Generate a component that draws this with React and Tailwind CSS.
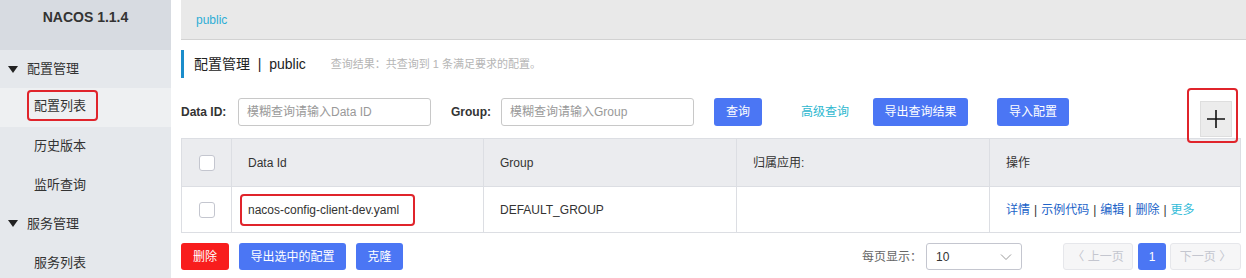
import React from "react";

const font = { fontFamily: '"Liberation Sans", "Noto Sans CJK SC", sans-serif' };

function Checkbox() {
  return <div className="w-4 h-4 rounded-[3px] border border-[#c4c6cf] bg-white" />;
}

function SideItem({ children, cls }) {
  return (
    <div className={`shrink-0 flex items-center pl-[34px] text-[13px] text-[#333] ${cls}`}>
      {children}
    </div>
  );
}

function SideGroup({ children, cls }) {
  return (
    <div className={`shrink-0 flex items-center pl-[8px] text-[13px] text-[#333] ${cls}`}>
      <svg width="10" height="7" viewBox="0 0 10 7" className="mr-[9px]">
        <path d="M0 0h10L5 7z" fill="#222" />
      </svg>
      {children}
    </div>
  );
}

function BlueBtn({ children, w }) {
  return (
    <div className={`h-[28px] ${w} rounded-[3px] bg-[#4b76f4] text-white text-[12px] flex items-center justify-center`}>
      {children}
    </div>
  );
}

export default function App() {
  return (
    <div className="w-[1246px] h-[278px] overflow-hidden flex bg-white" style={font}>
      {/* Sidebar */}
      <div className="w-[171px] shrink-0 bg-[#e5e8ec] flex flex-col">
        <div className="h-[50px] shrink-0 bg-[#d7dbe1] flex justify-center pt-[7px]">
          <span className="text-[14px] font-bold text-[#333]">NACOS 1.1.4</span>
        </div>
        <SideGroup cls="h-[38px]">配置管理</SideGroup>
        <SideItem cls="h-[39px] pb-[4px] bg-[#eef0f2]">
          <span className="relative">
            配置列表
            <span className="absolute left-[-7px] right-[-12px] top-[-6px] bottom-[-6px] border-2 border-[#e0242b] rounded-[4px]" />
          </span>
        </SideItem>
        <SideItem cls="h-[38px]">历史版本</SideItem>
        <SideItem cls="h-[39px]">监听查询</SideItem>
        <SideGroup cls="h-[39px]">服务管理</SideGroup>
        <SideItem cls="h-[39px]">服务列表</SideItem>
      </div>

      {/* Main */}
      <div className="ml-[10px] flex-1 flex flex-col">
        <div className="h-[40px] bg-[#e9e9e9] border-b border-[#d2d2d2] flex items-center pl-[15px]">
          <span className="text-[12px] text-[#2eaed6]">public</span>
        </div>

        <div className="pr-[5px]">
          {/* Title */}
          <div className="mt-[10px] h-[28px] border-l-[3px] border-[#1b8dcb] flex items-center pl-[10px]">
            <span className="text-[14px] text-[#222]">配置管理&nbsp;&nbsp;|&nbsp;&nbsp;public</span>
            <span className="ml-[25px] text-[11px] text-[#b5b5b5]">查询结果：共查询到 1 条满足要求的配置。</span>
          </div>

          {/* Search row */}
          <div className="mt-[20px] h-[40px] flex items-start">
            <div className="h-[28px] flex items-center text-[12px] font-bold text-[#333] w-[57px]">Data ID:</div>
            <div className="h-[28px] w-[193px] border border-[#c8c8c8] rounded-[3px] flex items-center pl-[8px] text-[12px] text-[#999]">
              模糊查询请输入Data ID
            </div>
            <div className="h-[28px] flex items-center text-[12px] font-bold text-[#333] ml-[20px] w-[50px]">Group:</div>
            <div className="h-[28px] w-[193px] border border-[#c8c8c8] rounded-[3px] flex items-center pl-[8px] text-[12px] text-[#999]">
              模糊查询请输入Group
            </div>
            <div className="ml-[20px]"><BlueBtn w="w-[48px]">查询</BlueBtn></div>
            <div className="ml-[39px] h-[28px] flex items-center text-[12px] text-[#2eb7cf]">高级查询</div>
            <div className="ml-[24px]"><BlueBtn w="w-[95px]">导出查询结果</BlueBtn></div>
            <div className="ml-[29px]"><BlueBtn w="w-[72px]">导入配置</BlueBtn></div>
            <div className="ml-auto mr-[9px] mt-[3px] relative">
              <div className="w-[32px] h-[36px] bg-[#ececec] border border-[#dedede] flex items-center justify-center">
                <svg width="20" height="20" viewBox="0 0 20 20">
                  <path d="M10 1v18M1 10h18" stroke="#111" strokeWidth="1.6" />
                </svg>
              </div>
              <div className="absolute left-[-13px] right-[-6px] top-[-13px] bottom-[-6px] border-2 border-[#e0242b] rounded-[4px]" />
            </div>
          </div>

          {/* Table */}
          <div className="border border-[#dcdee3] text-[12px] text-[#333]">
            <div className="h-[47px] bg-[#ebecef] flex">
              <div className="w-[50px] flex items-center justify-center border-r border-[#dcdee3]"><Checkbox /></div>
              <div className="w-[252px] flex items-center pl-[16px] border-r border-[#dcdee3]">Data Id</div>
              <div className="w-[253px] flex items-center pl-[16px] border-r border-[#dcdee3]">Group</div>
              <div className="w-[253px] flex items-center pl-[16px] border-r border-[#dcdee3]">归属应用:</div>
              <div className="flex-1 flex items-center pl-[16px]">操作</div>
            </div>
            <div className="h-[46px] bg-white flex border-t border-[#dcdee3]">
              <div className="w-[50px] flex items-center justify-center border-r border-[#dcdee3]"><Checkbox /></div>
              <div className="w-[252px] flex items-center pl-[16px] border-r border-[#dcdee3]">
                <span className="relative">
                  nacos-config-client-dev.yaml
                  <span className="absolute left-[-8px] right-[-16px] top-[-7px] bottom-[-7px] border-2 border-[#e0242b] rounded-[4px]" />
                </span>
              </div>
              <div className="w-[253px] flex items-center pl-[16px] border-r border-[#dcdee3]">DEFAULT_GROUP</div>
              <div className="w-[253px] border-r border-[#dcdee3]" />
              <div className="flex-1 flex items-center pl-[16px] text-[#2163c8]">
                <span>详情</span>
                <span className="mx-[4px] text-[#333]">|</span>
                <span>示例代码</span>
                <span className="mx-[4px] text-[#333]">|</span>
                <span>编辑</span>
                <span className="mx-[4px] text-[#333]">|</span>
                <span>删除</span>
                <span className="mx-[4px] text-[#333]">|</span>
                <span className="text-[#33bcd9]">更多</span>
              </div>
            </div>
          </div>

          {/* Bottom row */}
          <div className="mt-[10px] flex items-center">
            <div className="h-[27px] w-[48px] rounded-[3px] bg-[#f81d1d] text-white text-[12px] flex items-center justify-center">删除</div>
            <div className="ml-[10px] h-[27px] w-[107px] rounded-[3px] bg-[#4b76f4] text-white text-[12px] flex items-center justify-center">导出选中的配置</div>
            <div className="ml-[10px] h-[27px] w-[47px] rounded-[3px] bg-[#4b76f4] text-white text-[12px] flex items-center justify-center">克隆</div>
            <div className="ml-auto text-[12px] text-[#666]">每页显示：</div>
            <div className="ml-[4px] h-[27px] w-[96px] border border-[#c4c6cf] rounded-[3px] flex items-center justify-between pl-[9px] pr-[9px] text-[12px] text-[#333]">
              <span>10</span>
              <svg width="12" height="8" viewBox="0 0 12 8">
                <path d="M1 1.5l5 5 5-5" stroke="#999" strokeWidth="1" fill="none" />
              </svg>
            </div>
            <div className="ml-[41px] h-[27px] w-[70px] border border-[#e6e7eb] bg-[#f6f6f7] rounded-[3px] flex items-center justify-center text-[12px] text-[#c4c6cf]">
              〈 上一页
            </div>
            <div className="ml-[5px] h-[27px] w-[28px] rounded-[3px] bg-[#4b76f4] text-white text-[12px] flex items-center justify-center">1</div>
            <div className="ml-[4px] h-[27px] w-[71px] border border-[#e6e7eb] bg-[#f6f6f7] rounded-[3px] flex items-center justify-center text-[12px] text-[#c4c6cf]">
              下一页 〉
            </div>
          </div>
        </div>
      </div>
    </div>
  );
}
